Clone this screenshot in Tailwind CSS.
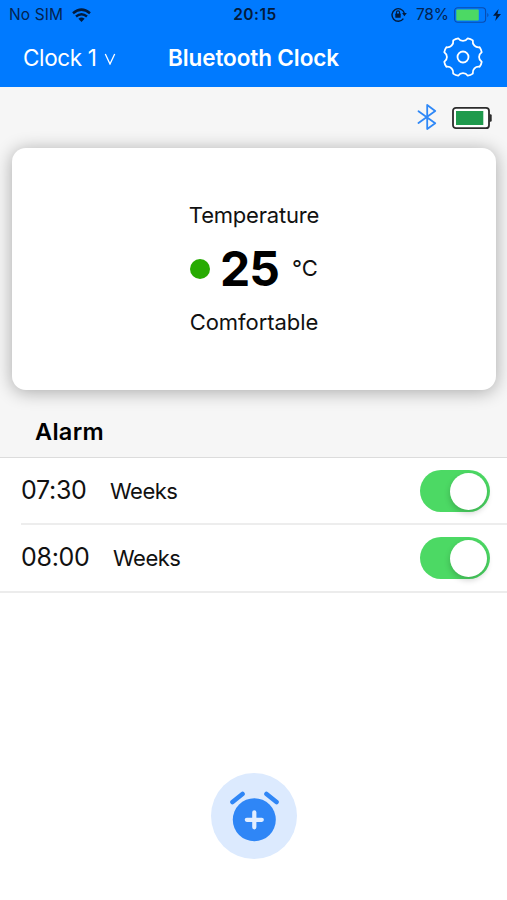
<!DOCTYPE html>
<html lang="en">
<head>
<meta charset="utf-8">
<title>Bluetooth Clock</title>
<script src="https://cdn.jsdelivr.net/npm/@tailwindcss/browser@4"></script>
</head>
<body class="bg-white">
<div class="flex h-[900px] w-[507px] flex-col overflow-hidden bg-white font-['Inter','Liberation_Sans',sans-serif] text-[#111] whitespace-nowrap">
  <header class="h-[87px] shrink-0 bg-[#007aff]">
    <div class="grid h-[30px] grid-cols-[1fr_auto_1fr] items-center pr-[6px] pl-[9px] text-[15.5px] text-[#042350]">
      <div class="flex items-center gap-[8px]">
        <span class="w-[55px] tracking-[0.1px]">No SIM</span>
        <svg class="h-[14px] w-[19px]" viewBox="0 0 19 14" fill="none" stroke="#031b3c" stroke-width="2.5"><path d="M1 5.2Q9.5-2 18 5.2M4 8.5Q9.5 4 15 8.5"/><path d="M6.4 10.8Q9.5 8.2 12.6 10.8L9.5 14Z" fill="#031b3c" stroke="none"/></svg>
      </div>
      <span class="text-[15.5px] font-semibold tracking-[0.5px] text-[#031b3c]">20:15</span>
      <div class="flex items-center justify-end">
        <svg class="mr-[9px] mb-[1px] h-[15px] w-[16px]" viewBox="0 0 16 15" fill="none" stroke="#031b3c" stroke-width="1.4"><path d="M12.4 11.7A6.3 6.3 0 1 1 13.3 6"/><path d="M11.1 6.1h4.7l-2.4 3.2Z" fill="#031b3c" stroke="none"/><rect x="4.3" y="6.6" width="5.4" height="4.2" rx=".6" fill="#031b3c" stroke="none"/><path d="M5.4 7V5.5a1.6 1.6 0 0 1 3.2 0V7" stroke-width="1.1"/></svg>
        <span class="mr-[5px] w-[33px] tracking-[-0.25px]">78%</span>
        <svg class="mr-[3px] h-[16px] w-[36px]" viewBox="0 0 36 16"><rect x=".6" y=".8" width="31" height="14.4" rx="3.2" fill="none" stroke="#0a4cae" stroke-width="1.1"/><rect x="2.3" y="2.6" width="22.5" height="10.8" rx="1" fill="#4cd964"/><path d="M33.3 5.7q2.4 2.3 0 4.6Z" fill="#0a4cae"/></svg>
        <svg class="h-[12px] w-[8px]" viewBox="0 0 8 12"><path d="M5.6 0L0 6.8h3.4L2.2 12 8 5H4.5Z" fill="#031b3c"/></svg>
      </div>
    </div>
    <div class="grid h-[56px] grid-cols-[1fr_auto_1fr] items-center pr-[23px] pl-[23px] text-white">
      <div class="flex items-center">
        <span class="w-[81px] text-[22.5px] tracking-[-0.35px]">Clock 1</span>
        <svg class="mt-[2px] h-[12px] w-[12px]" viewBox="0 0 12 12" fill="none" stroke="#fff" stroke-width="1.3"><path d="M1.3 1L6 11 10.7 1"/></svg>
      </div>
      <h1 class="text-[22.5px] font-semibold tracking-[-0.1px]">Bluetooth Clock</h1>
      <svg class="mb-[2px] h-[42px] w-[42px] justify-self-end" viewBox="-21 -21 42 42" fill="none" stroke="#fff" stroke-width="1.8" stroke-linejoin="round"><path d="M18.69 4.83Q18.3 7.5 16.63 9.8C12.5 9.2 9.2 12.5 9.8 16.63Q7.5 18.3 4.83 18.69C2.4 15.2-2.4 15.2-4.83 18.69Q-7.5 18.3-9.8 16.63C-9.2 12.5-12.5 9.2-16.63 9.8Q-18.3 7.5-18.69 4.83C-15.2 2.4-15.2-2.4-18.69-4.83Q-18.3-7.5-16.63-9.8C-12.5-9.2-9.2-12.5-9.8-16.63Q-7.5-18.3-4.83-18.69C-2.4-15.2 2.4-15.2 4.83-18.69Q7.5-18.3 9.8-16.63C9.2-12.5 12.5-9.2 16.63-9.8Q18.3-7.5 18.69-4.83C15.2-2.4 15.2 2.4 18.69 4.83Z"/><circle r="5.5"/></svg>
    </div>
  </header>
  <main class="flex flex-1 flex-col">
    <section class="h-[371px] shrink-0 overflow-hidden border-b border-[#dcdcdc] bg-[#f6f6f6]">
      <div class="flex h-[61px] items-center justify-end gap-[15px] pr-[15px]">
        <svg class="mb-[1px] h-[26px] w-[20px]" viewBox="0 0 20 26" fill="none" stroke="#2f88f7" stroke-width="1.8" stroke-linejoin="round" stroke-linecap="round"><path d="M1.5 7.2L18.2 19.2 10.2 25V1L18.2 7 1.5 19"/></svg>
        <svg class="h-[24px] w-[40px]" viewBox="0 0 40 24"><rect x="1" y="1.8" width="36" height="20.4" rx="3" fill="#fff" stroke="#2c2c2c" stroke-width="1.8"/><rect x="4" y="5" width="27.3" height="14" fill="#1f9a4d"/><path d="M37.5 8.3h1a1.2 1.2 0 0 1 1.2 1.2v5a1.2 1.2 0 0 1-1.2 1.2h-1Z" fill="#2c2c2c"/></svg>
      </div>
      <div class="mr-[11px] ml-[12px] flex h-[242px] flex-col items-center rounded-[14px] bg-white pt-[51px] text-[22px] shadow-[0_2px_18px_rgba(0,0,0,0.32)]">
        <p class="h-[32px] leading-[32px] tracking-[-0.2px]">Temperature</p>
        <div class="flex h-[75px] items-center">
          <span class="mr-[10px] size-[20px] rounded-full bg-[#27ab02]"></span>
          <span class="w-[61px] text-[48px] font-bold tracking-[-1px] text-black">25</span>
          <span class="ml-[11px]">°C</span>
        </div>
        <p class="h-[32px] leading-[32px] tracking-[-0.05px]">Comfortable</p>
      </div>
      <h2 class="mt-[26px] pl-[35px] text-[23.5px] leading-[32px] font-semibold tracking-[0.3px] text-black">Alarm</h2>
    </section>
    <ul class="h-[135px] border-b-2 border-[#ececec]">
      <li class="ml-[21px] flex h-[67px] items-center border-b-2 border-[#ededed] pt-[1px] pr-[17px]">
        <span class="w-[66px] text-[25px] tracking-[-0.3px]">07:30</span>
        <span class="ml-[23px] text-[22px] tracking-[-0.5px]">Weeks</span>
        <span class="ml-auto flex h-[42px] w-[70px] items-center justify-end rounded-full bg-[#4cd964] pr-[3px]"><span class="size-[37px] rounded-full bg-white shadow-[0_3px_6px_rgba(0,0,0,0.2)]"></span></span>
      </li>
      <li class="ml-[21px] flex h-[66px] items-center pr-[17px]">
        <span class="w-[69px] text-[25px] tracking-[-0.3px]">08:00</span>
        <span class="ml-[23px] text-[22px] tracking-[-0.5px]">Weeks</span>
        <span class="ml-auto flex h-[42px] w-[70px] items-center justify-end rounded-full bg-[#4cd964] pr-[3px]"><span class="size-[37px] rounded-full bg-white shadow-[0_3px_6px_rgba(0,0,0,0.2)]"></span></span>
      </li>
    </ul>
    <button class="mt-[180px] ml-[211px] size-[86px] rounded-full bg-[#dceafe]" aria-label="Add alarm">
      <svg class="size-[86px]" viewBox="0 0 86 86" fill="none" stroke-linecap="round"><circle cx="43.3" cy="46.7" r="21.5" fill="#2f86f6"/><path d="M21.5 29L31.5 21M55.5 21L65.5 29" stroke="#2f86f6" stroke-width="4.6"/><path d="M35.8 46.8H50.8M43.3 39.3V54.3" stroke="#e2eeff" stroke-width="4.2"/></svg>
    </button>
  </main>
</div>
</body>
</html>
